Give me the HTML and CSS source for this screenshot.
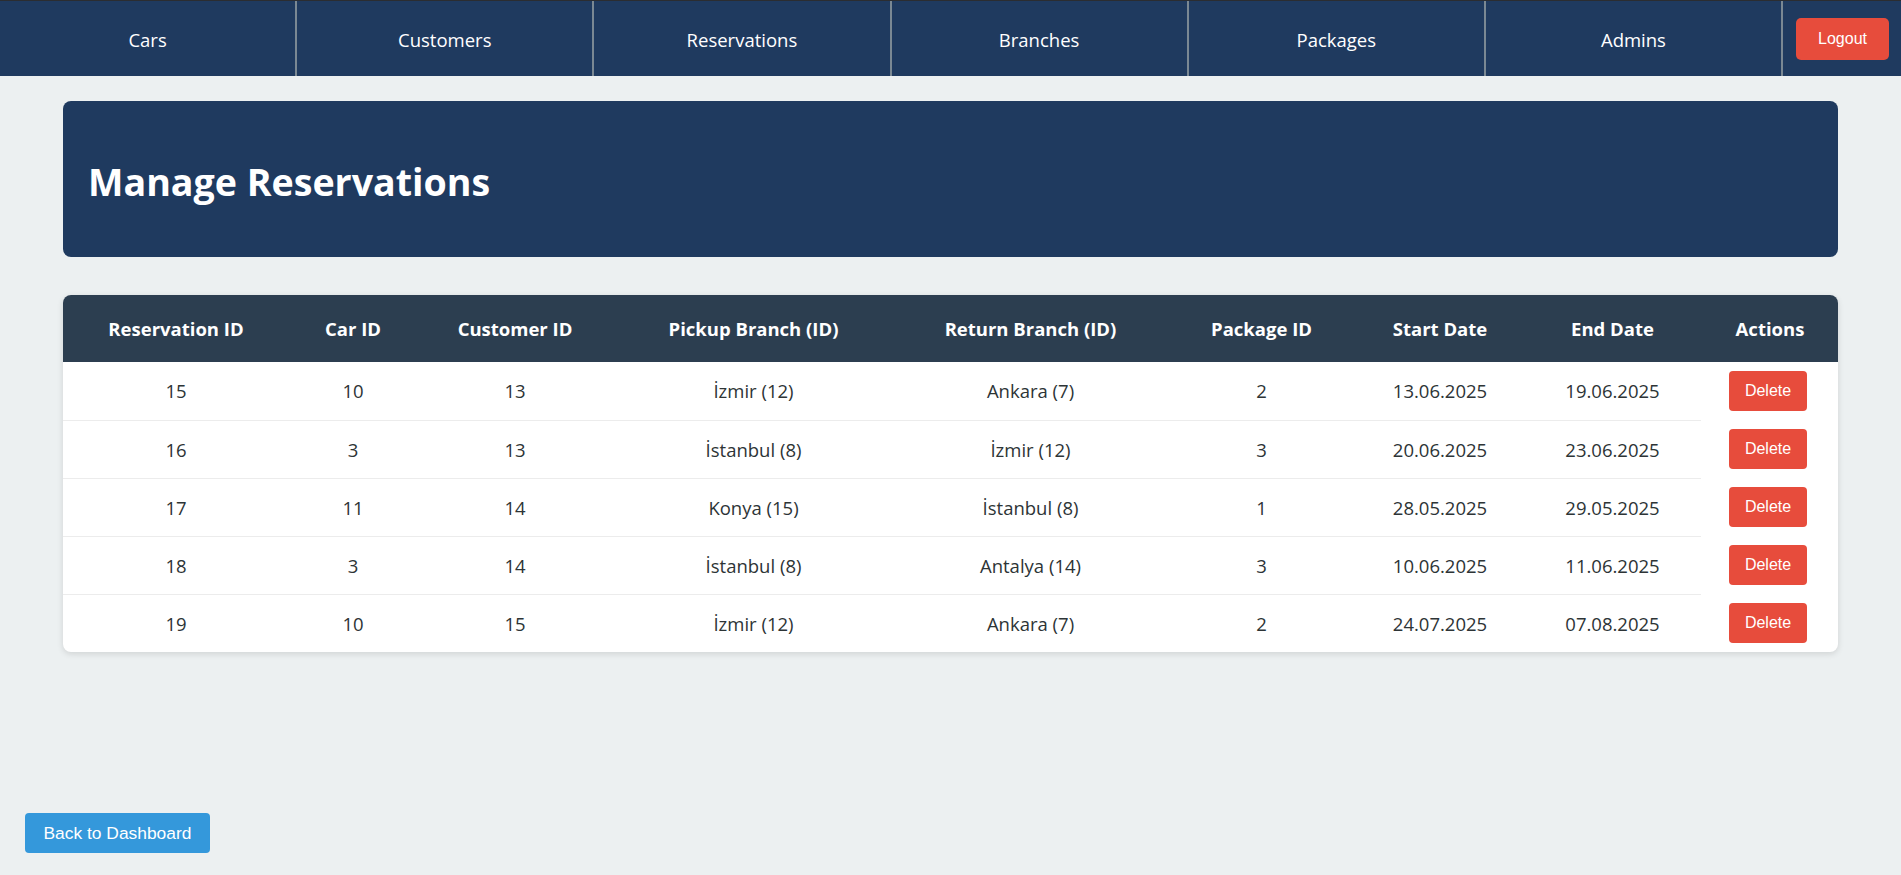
FILE: index.html
```html
<!DOCTYPE html>
<html lang="en">
<head>
<meta charset="utf-8">
<title>Manage Reservations</title>
<link rel="stylesheet" href="styles.css">
</head>
<body>
<nav class="topnav">
  <a class="nav-link" href="#">Cars</a>
  <a class="nav-link" href="#">Customers</a>
  <a class="nav-link" href="#">Reservations</a>
  <a class="nav-link" href="#">Branches</a>
  <a class="nav-link" href="#">Packages</a>
  <a class="nav-link" href="#">Admins</a>
  <button class="logout-btn" type="button">Logout</button>
</nav>

<main class="container">
  <header class="page-header">
    <h1 class="page-title">Manage Reservations</h1>
  </header>

  <section class="table-card">
    <table class="res-table">
      <colgroup>
        <col class="c-res">
        <col class="c-car">
        <col class="c-cust">
        <col class="c-pick">
        <col class="c-ret">
        <col class="c-pkg">
        <col class="c-start">
        <col class="c-end">
        <col class="c-act">
      </colgroup>
      <thead>
        <tr>
          <th>Reservation ID</th>
          <th>Car ID</th>
          <th>Customer ID</th>
          <th>Pickup Branch (ID)</th>
          <th>Return Branch (ID)</th>
          <th>Package ID</th>
          <th>Start Date</th>
          <th>End Date</th>
          <th>Actions</th>
        </tr>
      </thead>
      <tbody>
        <tr>
          <td>15</td><td>10</td><td>13</td><td>İzmir (12)</td><td>Ankara (7)</td><td>2</td><td>13.06.2025</td><td>19.06.2025</td>
          <td class="act-cell"><button class="delete-btn" type="button">Delete</button></td>
        </tr>
        <tr>
          <td>16</td><td>3</td><td>13</td><td>İstanbul (8)</td><td>İzmir (12)</td><td>3</td><td>20.06.2025</td><td>23.06.2025</td>
          <td class="act-cell"><button class="delete-btn" type="button">Delete</button></td>
        </tr>
        <tr>
          <td>17</td><td>11</td><td>14</td><td>Konya (15)</td><td>İstanbul (8)</td><td>1</td><td>28.05.2025</td><td>29.05.2025</td>
          <td class="act-cell"><button class="delete-btn" type="button">Delete</button></td>
        </tr>
        <tr>
          <td>18</td><td>3</td><td>14</td><td>İstanbul (8)</td><td>Antalya (14)</td><td>3</td><td>10.06.2025</td><td>11.06.2025</td>
          <td class="act-cell"><button class="delete-btn" type="button">Delete</button></td>
        </tr>
        <tr>
          <td>19</td><td>10</td><td>15</td><td>İzmir (12)</td><td>Ankara (7)</td><td>2</td><td>24.07.2025</td><td>07.08.2025</td>
          <td class="act-cell"><button class="delete-btn" type="button">Delete</button></td>
        </tr>
      </tbody>
    </table>
  </section>
</main>

<a class="back-btn" href="#">Back to Dashboard</a>
</body>
</html>
```

FILE: styles.css
```css
* { box-sizing: border-box; }

html, body {
  margin: 0;
  padding: 0;
}

body {
  background: #ecf0f1;
  font-family: "Open Sans", "Noto Sans", sans-serif;
  font-size: 18.5px;
  color: #2d3436;
  min-height: 875px;
}

/* ---------- top navigation ---------- */
.topnav {
  display: flex;
  align-items: stretch;
  height: 76px;
  background: #1f3a5f;
  border-top: 1px solid #2b2d31;
}

.nav-link {
  flex: 1 1 0;
  display: flex;
  align-items: center;
  justify-content: center;
  padding-top: 1px;
  color: #ffffff;
  text-decoration: none;
  font-size: 18.5px;
  border-right: 2px solid #7a8893;
}

.logout-btn {
  align-self: center;
  margin: 0 12px 0 13px;
  padding: 12px 22px;
  border: none;
  border-radius: 5px;
  background: #e74c3c;
  color: #ffffff;
  font-family: "Liberation Sans", Arial, sans-serif;
  font-size: 16px;
  line-height: 18px;
}

/* ---------- page content ---------- */
.container {
  margin: 25px 63px 0;
}

.page-header {
  background: #1f3a5f;
  border-radius: 8px;
  padding: 51px 25px 45px;
}

.page-title {
  margin: 0;
  color: #ffffff;
  font-size: 37.6px;
  line-height: 60px;
  font-weight: 700;
}

.table-card {
  margin-top: 38px;
  background: #ffffff;
  border-radius: 8px;
  overflow: hidden;
  box-shadow: 0 2px 6px rgba(0, 0, 0, 0.12);
}

.res-table {
  width: 100%;
  border-collapse: collapse;
  table-layout: fixed;
}

.c-res { width: 226px; }
.c-car { width: 128px; }
.c-cust { width: 196px; }
.c-pick { width: 281px; }
.c-ret { width: 273px; }
.c-pkg { width: 189px; }
.c-start { width: 168px; }
.c-end { width: 177px; }
.c-act { width: 138px; }

.res-table th {
  background: #2c3e50;
  color: #ffffff;
  font-weight: 700;
  padding: 21px 6px 20px;
  line-height: 26px;
  text-align: center;
}

.res-table td {
  padding: 16px 6px;
  line-height: 25px;
  text-align: center;
  border-bottom: 1px solid #ececec;
}

.res-table tbody tr:last-child td {
  border-bottom: none;
}

.res-table td.act-cell {
  padding: 9px 8px 9px 4px;
  border-bottom: none;
}

.delete-btn {
  padding: 11px 16px;
  border: none;
  border-radius: 4px;
  background: #e74c3c;
  color: #ffffff;
  font-family: "Liberation Sans", Arial, sans-serif;
  font-size: 16px;
  line-height: 18px;
}

.back-btn {
  position: fixed;
  left: 25px;
  bottom: 22px;
  padding: 10px 18.5px;
  border-radius: 4px;
  background: #3498db;
  color: #ffffff;
  text-decoration: none;
  font-family: "Liberation Sans", Arial, sans-serif;
  font-size: 17.4px;
  line-height: 20px;
}
```
